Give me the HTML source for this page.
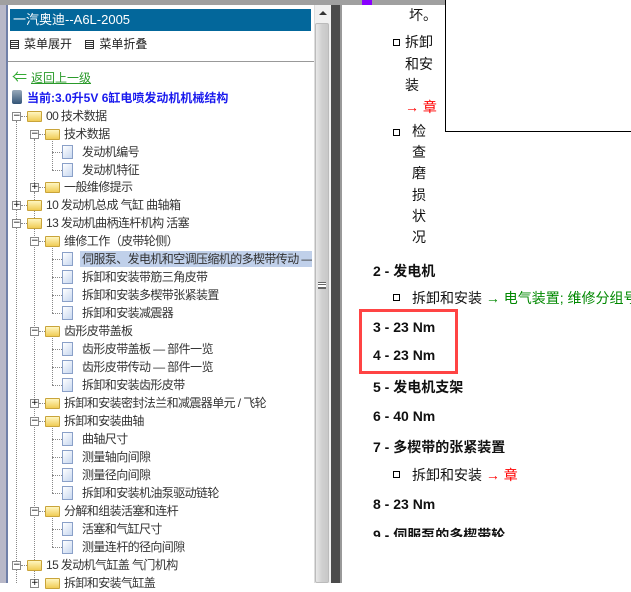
<!DOCTYPE html><html><head><meta charset="utf-8"><style>
*{margin:0;padding:0;box-sizing:border-box}
body{width:631px;height:583px;overflow:hidden;background:#fff;position:relative;font-family:"Liberation Sans","Noto Sans CJK SC",sans-serif;font-size:12px;color:#333}
.a{position:absolute;white-space:nowrap}
.r{position:absolute;height:18px;line-height:18px;white-space:nowrap;letter-spacing:-0.6px}
.bx{position:absolute;width:9px;height:9px;border:1px solid #888;background:#fff;font-size:9px;line-height:7px;text-align:center;color:#000;font-family:"DejaVu Sans",sans-serif}
.fd{position:absolute;width:15px;height:11px;background:linear-gradient(#fff6c0,#f0cc55);border:1px solid #c9a43a;border-radius:1px}
.dc{position:absolute;width:11px;height:14px;background:linear-gradient(135deg,#fff,#c8d8f0);border:1px solid #8aa0c8}
.ln{position:absolute;border-left:1px dotted #888}
.hl{position:absolute;border-top:1px dotted #888;width:12px}
.rc{font-family:"Liberation Sans","Noto Sans CJK SC",sans-serif;font-size:14px;color:#111}
.b{font-weight:bold}
.sq{position:absolute;width:7px;height:7px;border:1px solid #000}
.mi{display:inline-block;width:9px;height:9px;border:1px solid #333;vertical-align:-1px;margin-right:5px;background:linear-gradient(#fff 0 1px,#333 1px 2px,#fff 2px 3px,#333 3px 4px,#fff 4px 5px,#333 5px 6px,#fff 6px)}
</style></head><body>
<div class="a" style="left:0;top:0;width:631px;height:5px;background:#a0a0a0"></div>
<div class="a" style="left:0;top:5px;width:7px;height:578px;background:#b8b8c8"></div>
<div class="a" style="left:6px;top:5px;width:2px;height:578px;background:#7080a8"></div>
<div class="a" style="left:10px;top:9px;width:301px;height:22px;background:#03679b;color:#fff;font-size:13px;line-height:22px;padding-left:3px">一汽奥迪--A6L-2005</div>
<div class="a" style="left:10px;top:36px;line-height:16px;font-size:12px;color:#222">
<span class="mi"></span>菜单展开 &nbsp;&nbsp;
<span class="mi"></span>菜单折叠</div>
<div class="a" style="left:8px;top:61px;width:306px;height:1px;background:#999"></div>
<div class="a" style="left:12px;top:73px;color:#3a3;font-size:15px;line-height:10px">⇐</div>
<div class="a" style="left:31px;top:70px;color:#2a9a2a;text-decoration:underline;line-height:16px">返回上一级</div>
<div class="a" style="left:12px;top:90px;width:10px;height:14px;background:linear-gradient(#9ab,#357);border-radius:2px"></div>
<div class="a" style="left:27px;top:90px;color:#1a1aee;font-weight:bold;line-height:16px">当前:3.0升5V 6缸电喷发动机机械结构</div>
<div class="a" style="left:80px;top:251px;width:232px;height:16px;background:#c0d0ea"></div>
<div class="ln" style="left:16px;top:121px;height:462px"></div>
<div class="ln" style="left:34px;top:139px;height:48px"></div>
<div class="ln" style="left:34px;top:192px;height:390px"></div>
<div class="ln" style="left:52px;top:139px;height:31px"></div>
<div class="ln" style="left:52px;top:246px;height:67px"></div>
<div class="ln" style="left:52px;top:336px;height:49px"></div>
<div class="ln" style="left:52px;top:426px;height:67px"></div>
<div class="ln" style="left:52px;top:516px;height:31px"></div>
<div class="bx" style="left:12px;top:112px">−</div><div class="hl" style="left:21px;top:116px;width:6px"></div><div class="fd" style="left:27px;top:111px"></div><div class="r" style="left:46px;top:107px">00 技术数据</div>
<div class="bx" style="left:30px;top:130px">−</div><div class="hl" style="left:39px;top:134px;width:6px"></div><div class="fd" style="left:45px;top:129px"></div><div class="r" style="left:64px;top:125px">技术数据</div>
<div class="hl" style="left:52px;top:152px;width:10px"></div><div class="dc" style="left:62px;top:145px"></div><div class="r" style="left:82px;top:143px">发动机编号</div>
<div class="hl" style="left:52px;top:170px;width:10px"></div><div class="dc" style="left:62px;top:163px"></div><div class="r" style="left:82px;top:161px">发动机特征</div>
<div class="bx" style="left:30px;top:183px">+</div><div class="hl" style="left:39px;top:187px;width:6px"></div><div class="fd" style="left:45px;top:182px"></div><div class="r" style="left:64px;top:178px">一般维修提示</div>
<div class="bx" style="left:12px;top:201px">+</div><div class="hl" style="left:21px;top:205px;width:6px"></div><div class="fd" style="left:27px;top:200px"></div><div class="r" style="left:46px;top:196px">10 发动机总成 气缸 曲轴箱</div>
<div class="bx" style="left:12px;top:219px">−</div><div class="hl" style="left:21px;top:223px;width:6px"></div><div class="fd" style="left:27px;top:218px"></div><div class="r" style="left:46px;top:214px">13 发动机曲柄连杆机构 活塞</div>
<div class="bx" style="left:30px;top:237px">−</div><div class="hl" style="left:39px;top:241px;width:6px"></div><div class="fd" style="left:45px;top:236px"></div><div class="r" style="left:64px;top:232px">维修工作（皮带轮侧）</div>
<div class="hl" style="left:52px;top:259px;width:10px"></div><div class="dc" style="left:62px;top:252px"></div><div class="r" style="left:82px;top:250px;width:230px;overflow:hidden">伺服泵、发电机和空调压缩机的多楔带传动 — 部件一览</div>
<div class="hl" style="left:52px;top:277px;width:10px"></div><div class="dc" style="left:62px;top:270px"></div><div class="r" style="left:82px;top:268px">拆卸和安装带筋三角皮带</div>
<div class="hl" style="left:52px;top:295px;width:10px"></div><div class="dc" style="left:62px;top:288px"></div><div class="r" style="left:82px;top:286px">拆卸和安装多楔带张紧装置</div>
<div class="hl" style="left:52px;top:313px;width:10px"></div><div class="dc" style="left:62px;top:306px"></div><div class="r" style="left:82px;top:304px">拆卸和安装减震器</div>
<div class="bx" style="left:30px;top:327px">−</div><div class="hl" style="left:39px;top:331px;width:6px"></div><div class="fd" style="left:45px;top:326px"></div><div class="r" style="left:64px;top:322px">齿形皮带盖板</div>
<div class="hl" style="left:52px;top:349px;width:10px"></div><div class="dc" style="left:62px;top:342px"></div><div class="r" style="left:82px;top:340px">齿形皮带盖板 — 部件一览</div>
<div class="hl" style="left:52px;top:367px;width:10px"></div><div class="dc" style="left:62px;top:360px"></div><div class="r" style="left:82px;top:358px">齿形皮带传动 — 部件一览</div>
<div class="hl" style="left:52px;top:385px;width:10px"></div><div class="dc" style="left:62px;top:378px"></div><div class="r" style="left:82px;top:376px">拆卸和安装齿形皮带</div>
<div class="bx" style="left:30px;top:399px">+</div><div class="hl" style="left:39px;top:403px;width:6px"></div><div class="fd" style="left:45px;top:398px"></div><div class="r" style="left:64px;top:394px">拆卸和安装密封法兰和减震器单元 / 飞轮</div>
<div class="bx" style="left:30px;top:417px">−</div><div class="hl" style="left:39px;top:421px;width:6px"></div><div class="fd" style="left:45px;top:416px"></div><div class="r" style="left:64px;top:412px">拆卸和安装曲轴</div>
<div class="hl" style="left:52px;top:439px;width:10px"></div><div class="dc" style="left:62px;top:432px"></div><div class="r" style="left:82px;top:430px">曲轴尺寸</div>
<div class="hl" style="left:52px;top:457px;width:10px"></div><div class="dc" style="left:62px;top:450px"></div><div class="r" style="left:82px;top:448px">测量轴向间隙</div>
<div class="hl" style="left:52px;top:475px;width:10px"></div><div class="dc" style="left:62px;top:468px"></div><div class="r" style="left:82px;top:466px">测量径向间隙</div>
<div class="hl" style="left:52px;top:493px;width:10px"></div><div class="dc" style="left:62px;top:486px"></div><div class="r" style="left:82px;top:484px">拆卸和安装机油泵驱动链轮</div>
<div class="bx" style="left:30px;top:507px">−</div><div class="hl" style="left:39px;top:511px;width:6px"></div><div class="fd" style="left:45px;top:506px"></div><div class="r" style="left:64px;top:502px">分解和组装活塞和连杆</div>
<div class="hl" style="left:52px;top:529px;width:10px"></div><div class="dc" style="left:62px;top:522px"></div><div class="r" style="left:82px;top:520px">活塞和气缸尺寸</div>
<div class="hl" style="left:52px;top:547px;width:10px"></div><div class="dc" style="left:62px;top:540px"></div><div class="r" style="left:82px;top:538px">测量连杆的径向间隙</div>
<div class="bx" style="left:12px;top:561px">−</div><div class="hl" style="left:21px;top:565px;width:6px"></div><div class="fd" style="left:27px;top:560px"></div><div class="r" style="left:46px;top:556px">15 发动机气缸盖 气门机构</div>
<div class="bx" style="left:30px;top:579px">+</div><div class="fd" style="left:45px;top:578px"></div><div class="r" style="left:64px;top:574px">拆卸和安装气缸盖</div>
<div class="a" style="left:314px;top:5px;width:17px;height:578px;background:#f0f0f0;border-left:1px solid #ddd"></div>
<div class="a" style="left:319px;top:11px;width:0;height:0;border-left:4px solid transparent;border-right:4px solid transparent;border-bottom:4px solid #333"></div>
<div class="a" style="left:315px;top:23px;width:14px;height:560px;background:linear-gradient(90deg,#e8e8e8,#d0d0d0,#c8c8c8);border:1px solid #bbb;border-radius:2px"></div>
<div class="a" style="left:318px;top:282px;width:8px;height:7px;border-top:1px solid #666;border-bottom:1px solid #666;background:linear-gradient(#fff 0 1px,#666 1px 2px,#fff 2px 4px,#666 4px 5px,#fff 5px)"></div>
<div class="a" style="left:331px;top:5px;width:10px;height:578px;background:#4b4b4b"></div>
<div class="a" style="left:340px;top:5px;width:2px;height:578px;background:#999"></div>
<div class="a" style="left:362px;top:0;width:10px;height:5px;background:#8800ff"></div>
<div class="a" style="left:445px;top:0;width:190px;height:132px;border:1px solid #000;border-top:none;background:#fff"></div>
<div class="a rc" style="left:409px;top:5px">坏。</div>
<div class="sq" style="left:393px;top:39px"></div>
<div class="a rc" style="left:405px;top:32px;line-height:21.5px;white-space:normal;width:36px">拆卸和安装<br><span style="color:#f00">→ 章</span></div>
<div class="sq" style="left:393px;top:129px"></div>
<div class="a rc" style="left:412px;top:121px;line-height:21.2px;white-space:normal;width:16px">检查磨损状况</div>
<div class="a rc b" style="left:373px;top:261px">2 - 发电机</div>
<div class="sq" style="left:393px;top:294px"></div>
<div class="a rc" style="left:412px;top:288px">拆卸和安装 <span style="color:#080">→ 电气装置; 维修分组号27</span></div>
<div class="a" style="left:359px;top:309px;width:99px;height:65px;border:3px solid #f44"></div>
<div class="a rc b" style="left:373px;top:319px">3 - 23 Nm</div>
<div class="a rc b" style="left:373px;top:347px">4 - 23 Nm</div>
<div class="a rc b" style="left:373px;top:377px">5 - 发电机支架</div>
<div class="a rc b" style="left:373px;top:408px">6 - 40 Nm</div>
<div class="a rc b" style="left:373px;top:437px">7 - 多楔带的张紧装置</div>
<div class="sq" style="left:393px;top:471px"></div>
<div class="a rc" style="left:412px;top:465px">拆卸和安装 <span style="color:#f00">→ 章</span></div>
<div class="a rc b" style="left:373px;top:496px">8 - 23 Nm</div>
<div class="a" style="left:373px;top:525px;height:12px;overflow:hidden"><span class="rc b">9 - 伺服泵的多楔带轮</span></div>
</body></html>
